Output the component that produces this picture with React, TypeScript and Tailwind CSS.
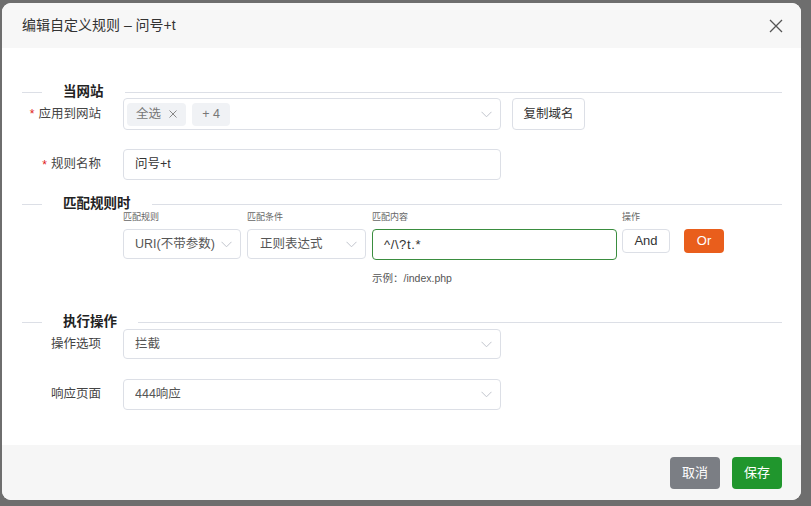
import type { ReactNode } from "react";

const font = { fontFamily: '"Liberation Sans", "Noto Sans CJK SC", sans-serif' };

function Chevron({ className = "" }: { className?: string }) {
  return (
    <svg width="11" height="7" viewBox="0 0 11 7" className={className}>
      <polyline points="0.5,0.8 5.5,5.8 10.5,0.8" fill="none" stroke="#c0c4cc" strokeWidth="1" />
    </svg>
  );
}

function SectionTitle({ title }: { title: string }) {
  return (
    <div className="flex h-[16px] items-center">
      <div className="h-px w-[20px] bg-[#dcdfe6]" />
      <div className="px-[21px] text-[13.5px] font-bold leading-none text-[#222]">{title}</div>
      <div className="h-px flex-1 bg-[#dcdfe6]" />
    </div>
  );
}

function Label({ children, required = false }: { children: ReactNode; required?: boolean }) {
  return (
    <div className="flex w-[79px] shrink-0 items-center justify-end text-[12.5px] text-[#444]">
      {required ? <span className="mr-[4px] text-[12px] text-[#e02020]">*</span> : null}
      {children}
    </div>
  );
}

function Select({ value, className = "" }: { value: string; className?: string }) {
  return (
    <div
      className={[
        "flex items-center justify-between rounded-[4px] border border-[#dcdfe6] bg-white pl-[11px] pr-[8px] text-[12.5px] text-[#555]",
        className,
      ].join(" ")}
    >
      <span className="truncate">{value}</span>
      <Chevron />
    </div>
  );
}

export default function App() {
  return (
    <div className="h-[506px] w-[811px] bg-[#6e6e6e] pl-[2px] pt-[3px]" style={font}>
      <div className="flex h-[497px] w-[799px] flex-col overflow-hidden rounded-[9px] bg-white">
        {/* header */}
        <div className="flex h-[45px] shrink-0 items-center justify-between bg-[#f7f7f7] pl-[20px] pr-[18px]">
          <div className="text-[14px] text-[#333]">编辑自定义规则 – 问号+t</div>
          <svg width="14" height="14" viewBox="0 0 14 14">
            <path d="M1 1L13 13M13 1L1 13" stroke="#555" strokeWidth="1.3" />
          </svg>
        </div>

        {/* body */}
        <div className="flex-1 pl-[20px] pr-[19px] pt-[36px]">
          <SectionTitle title="当网站" />
          <div className="-mt-[2px] flex h-[32px] items-center">
            <Label required>应用到网站</Label>
            <div className="ml-[22px] flex h-[32px] w-[378px] items-center justify-between rounded-[4px] border border-[#dcdfe6] pl-[3px] pr-[8px]">
              <div className="flex items-center gap-[6px]">
                <div className="flex h-[23px] w-[59px] items-center justify-center gap-[8px] rounded-[4px] bg-[#f0f2f5] text-[12.5px] text-[#777]">
                  <span>全选</span>
                  <svg width="8" height="8" viewBox="0 0 8 8">
                    <path d="M0.5 0.5L7.5 7.5M7.5 0.5L0.5 7.5" stroke="#888" strokeWidth="1" />
                  </svg>
                </div>
                <div className="flex h-[23px] w-[38px] items-center justify-center rounded-[4px] bg-[#f0f2f5] text-[12.5px] text-[#777]">
                  + 4
                </div>
              </div>
              <Chevron />
            </div>
            <div className="ml-[11px] flex h-[32px] w-[73px] items-center justify-center rounded-[4px] border border-[#dcdfe6] text-[12.5px] text-[#333]">
              复制域名
            </div>
          </div>

          <div className="mt-[19px] flex h-[31px] items-center">
            <Label required>规则名称</Label>
            <div className="ml-[22px] flex h-[31px] w-[378px] items-center rounded-[4px] border border-[#dcdfe6] pl-[11px] text-[12.5px] text-[#333]">
              问号+t
            </div>
          </div>

          <div className="mt-[16px]">
            <SectionTitle title="匹配规则时" />
          </div>
          <div className="-mt-[1px] flex pl-[101px]">
            <div className="flex w-[124px] flex-col">
              <div className="h-[12px] text-[9px] leading-[12px] text-[#666]">匹配规则</div>
              <Select value="URI(不带参数)" className="mt-[6px] h-[30px] w-[118px]" />
            </div>
            <div className="flex w-[125px] flex-col">
              <div className="h-[12px] text-[9px] leading-[12px] text-[#666]">匹配条件</div>
              <Select value="正则表达式" className="mt-[6px] h-[30px] w-[119px] pl-[12px]" />
            </div>
            <div className="flex w-[250px] flex-col">
              <div className="h-[12px] text-[9px] leading-[12px] text-[#666]">匹配内容</div>
              <div className="mt-[6px] flex h-[31px] w-[245px] items-center rounded-[4px] border border-[#3a8d3f] pl-[11px] text-[13px] tracking-[0.6px] text-[#333]">
                ^/\?t.*
              </div>
              <div className="mt-[11px] text-[10.5px] leading-[14px] text-[#555]">示例：/index.php</div>
            </div>
            <div className="flex flex-col">
              <div className="h-[12px] text-[9px] leading-[12px] text-[#666]">操作</div>
              <div className="mt-[6px] flex items-center gap-[14px]">
                <div className="flex h-[24px] w-[48px] items-center justify-center rounded-[4px] border border-[#dcdfe6] text-[13px] text-[#333]">
                  And
                </div>
                <div className="flex h-[24px] w-[40px] items-center justify-center rounded-[4px] bg-[#e95e1c] text-[13px] text-white">
                  Or
                </div>
              </div>
            </div>
          </div>

          <div className="mt-[29px]">
            <SectionTitle title="执行操作" />
          </div>
          <div className="-mt-[1px] flex h-[30px] items-center">
            <Label>操作选项</Label>
            <Select value="拦截" className="ml-[22px] h-[30px] w-[378px]" />
          </div>
          <div className="mt-[20px] flex h-[31px] items-center">
            <Label>响应页面</Label>
            <Select value="444响应" className="ml-[22px] h-[31px] w-[378px]" />
          </div>
        </div>

        {/* footer */}
        <div className="flex h-[55px] shrink-0 items-center justify-end gap-[12px] bg-[#f6f6f6] pr-[19px]">
          <div className="flex h-[32px] w-[50px] items-center justify-center rounded-[4px] bg-[#7b7e84] text-[13px] text-white">
            取消
          </div>
          <div className="flex h-[32px] w-[50px] items-center justify-center rounded-[4px] bg-[#20962d] text-[13px] text-white">
            保存
          </div>
        </div>
      </div>
    </div>
  );
}
